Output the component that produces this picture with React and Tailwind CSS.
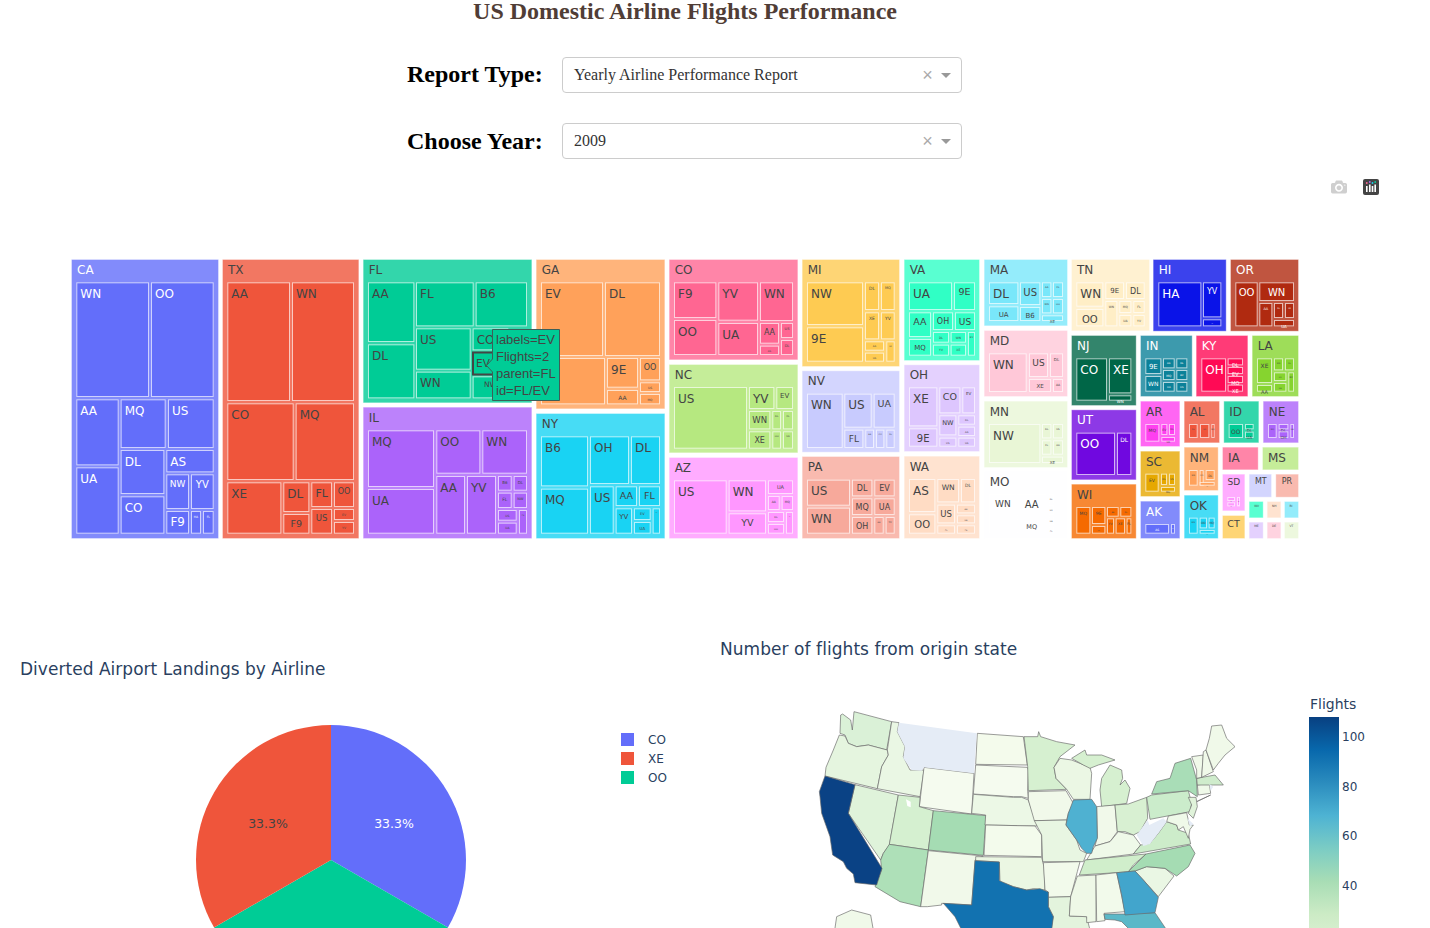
const DV = '"DejaVu Sans", Verdana, sans-serif';

const Z1 = [60, 250], Z2 = [530, 250], Z3 = [980, 250];

const TILES = [
  { s: 'CA', c: '#636efa', t: '#ffffff', o: Z1, b: [33, 477, 27, 867], k: [
    [49,267,97,441,'WN'],[273,461,97,441,'OO'],[49,176,448,646,'AA'],[182,317,448,594,'MQ'],[324,461,448,594,'US'],
    [49,176,652,851,'UA'],[182,313,600,732,'DL'],[319,461,600,667,'AS'],[182,313,739,851,'CO'],[319,387,673,777,'NW',9],
    [393,461,673,777,'YV',10],[319,387,783,851,'F9',11.9],[393,423,783,851,'HA',3],[429,461,783,851,'FL',3],
  ]},
  { s: 'TX', c: '#EF553B', t: '#444444', o: Z1, b: [486, 898, 27, 867], k: [
    [502,690,97,453,'AA'],[696,882,97,453,'WN'],[502,701,460,690,'CO'],[707,882,460,690,'MQ'],[502,664,697,851,'XE'],
    [670,748,697,786,'DL'],[754,816,697,771,'FL',11],[822,882,697,771,'OO',8],[670,748,792,851,'F9',9.5],
    [754,816,777,851,'US',8.5],[822,882,777,810,'EV',3],[822,882,816,851,'YV',3],
  ]},
  { s: 'FL', c: '#00cc96', t: '#444444', o: Z1, b: [908, 1417, 27, 460], k: [
    [924,1063,97,276,'AA'],[924,1063,283,445,'DL'],[1068,1241,97,229,'FL'],[1247,1401,97,229,'B6'],[1068,1232,235,359,'US'],
    [1068,1232,365,445,'WN'],[1238,1345,235,301,'CO'],[1238,1345,379,445,'NW',7.5],
  ]},
  { s: 'IL', c: '#ab63fa', t: '#444444', o: Z1, b: [908, 1417, 470, 867], k: [
    [924,1122,541,711,'MQ'],[1129,1261,541,671,'OO'],[1267,1401,541,671,'WN'],[924,1122,717,851,'UA'],[1129,1215,678,851,'AA'],
    [1221,1308,678,851,'YV'],[1314,1355,678,722,'B6',4],[1361,1401,678,722,'DL',4],[1314,1355,728,774,'FL',4.5],[1361,1401,728,774,'NW',3.5],
    [1314,1370,780,812,'US',3],[1377,1401,780,851,'F9',2],[1314,1370,818,851,'UA',3],
  ]},
  { s: 'GA', c: '#FFA15A', t: '#444444', o: Z2, b: [17, 406, 27, 478], k: [
    [33,219,97,318,'EV'],[225,390,97,318,'DL'],[33,225,324,463,'FL'],[231,324,324,413,'9E'],[330,390,324,391,'OO',8],
    [330,390,397,426,'US',3],[231,324,420,463,'AA',6],[330,390,432,463,'MQ',3],
  ]},
  { s: 'NY', c: '#19d3f3', t: '#444444', o: Z2, b: [17, 406, 489, 867], k: [
    [33,174,559,709,'B6'],[180,297,559,702,'OH'],[303,390,559,702,'DL'],[33,174,716,851,'MQ'],[180,251,709,851,'US'],
    [257,321,709,768,'AA',9.5],[327,390,709,768,'FL',9.5],[257,306,775,851,'YV',7],[312,362,775,810,'EV',3.5],[312,362,816,851,'UA',4],[368,390,775,851,'WN',1],
  ]},
  { s: 'CO', c: '#FF6692', t: '#444444', o: Z2, b: [416, 805, 27, 331], k: [
    [432,559,97,204,'F9'],[565,684,97,212,'YV'],[690,789,97,213,'WN'],[432,559,210,315,'OO'],[565,684,219,315,'UA'],
    [690,747,219,281,'AA',8],[753,789,219,264,'US',3.5],[690,747,287,315,'AS',2.5],[753,789,270,315,'DL',3.5],
  ]},
  { s: 'NC', c: '#B6E880', t: '#444444', o: Z2, b: [416, 805, 342, 610], k: [
    [432,651,411,596,'US'],[657,733,411,477,'YV'],[739,789,411,477,'EV',7],[657,721,483,538,'WN',8.5],[727,753,483,538,'DL',2.5],
    [759,789,483,538,'FL',2.5],[657,721,544,596,'XE',8],[727,753,544,596,'OO',2.5],[759,789,544,596,'UA',2.5],
  ]},
  { s: 'AZ', c: '#FF97FF', t: '#444444', o: Z2, b: [416, 805, 621, 867], k: [
    [432,590,691,851,'US'],[596,708,691,784,'WN'],[714,789,691,732,'UA',5],[596,708,790,851,'YV',9.5],[714,749,738,780,'AA',3],
    [755,789,738,780,'MQ',3],[714,762,786,816,'DL',2.5],[768,789,786,851,'F9',1],[714,762,822,851,'OO',2.5],
  ]},
  { s: 'MI', c: '#FECB52', t: '#444444', o: Z2, b: [815, 1110, 27, 351], k: [
    [831,999,97,225,'NW'],[831,999,232,335,'9E'],[1005,1047,97,180,'DL',4.5],[1053,1094,97,180,'MQ',3.5],[1005,1047,187,268,'XE',4.5],
    [1053,1094,187,268,'YV',4.5],[1005,1062,274,302,'AA',2.5],[1069,1094,274,335,'US',2],[1005,1062,308,335,'UA',2.5],
  ]},
  { s: 'NV', c: '#c8cbfe', t: '#444444', o: Z2, b: [815, 1110, 361, 608], k: [
    [831,938,431,594,'WN'],[943,1025,431,533,'US'],[1031,1094,431,533,'UA',9.5],[943,1000,539,594,'FL',9],[1006,1032,539,594,'AA',2],
    [1038,1063,539,594,'OO',2],[1069,1094,539,594,'DL',2],
  ]},
  { s: 'PA', c: '#f7a99b', t: '#444444', o: Z2, b: [815, 1110, 618, 867], k: [
    [831,960,689,767,'US'],[831,960,773,851,'WN'],[966,1027,689,739,'DL',8],[1033,1094,689,739,'EV',8],[966,1027,745,795,'MQ',8],
    [1033,1094,745,795,'UA',8],[966,1027,801,851,'OH',8],[1033,1061,801,851,'AA',2],[1067,1094,801,851,'YV',2.5],
  ]},
  { s: 'VA', c: '#30ffc5', t: '#444444', o: Z2, b: [1121, 1350, 27, 333], k: [
    [1137,1266,97,180,'UA'],[1272,1335,97,180,'9E',9.5],[1137,1203,187,261,'AA',9.5],[1209,1269,187,240,'OH',8],[1275,1335,187,240,'US',9],
    [1137,1203,267,317,'MQ',7],[1209,1257,246,278,'DL',3],[1262,1308,246,278,'WN',3],[1314,1335,246,317,'EV',2.5],[1209,1257,284,317,'YV',3],[1262,1308,284,317,'XE',3],
  ]},
  { s: 'OH', c: '#ddc6fe', t: '#444444', o: Z2, b: [1121, 1350, 343, 606], k: [
    [1137,1222,412,529,'XE'],[1228,1291,412,490,'CO',9.5],[1297,1335,412,490,'EV',4],[1228,1279,496,556,'NW',6.5],[1285,1335,496,524,'DL',2.5],
    [1285,1335,530,558,'AA',2.5],[1137,1222,535,590,'9E',10],[1228,1279,563,590,'US',2.5],[1285,1335,563,590,'UA',2.5],
  ]},
  { s: 'WA', c: '#ffdcc4', t: '#444444', o: Z2, b: [1121, 1350, 617, 867], k: [
    [1137,1216,687,786,'AS'],[1137,1216,793,851,'OO',10],[1222,1287,687,757,'WN',7.5],[1293,1335,687,757,'DL',4.5],[1222,1275,764,820,'US',8.5],
    [1281,1335,764,790,'AA',2],[1281,1335,796,820,'UA',2],[1222,1275,826,851,'FL',2],[1281,1335,826,851,'F9',2],
  ]},
  { s: 'MA', c: '#79e7fa', t: '#444444', o: Z3, b: [11, 264, 27, 229], k: [
    [27,115,97,162,'DL'],[120,181,97,165,'US',10],[186,214,97,141,'AA',2.5],[219,249,97,141,'FL',2.5],[186,214,147,190,'WN',2.5],
    [219,249,147,190,'OO',2.5],[27,115,169,213,'UA',7],[120,181,171,213,'B6',7],[186,249,196,213,'XE',4],
  ]},
  { s: 'MD', c: '#ffc8d8', t: '#444444', o: Z3, b: [11, 264, 240, 441], k: [
    [27,140,310,426,'WN'],[147,204,310,381,'US',9],[210,249,310,381,'DL',4],[147,213,387,426,'XE',5.5],[219,249,387,426,'AA',3],
  ]},
  { s: 'MN', c: '#e9f6d6', t: '#444444', o: Z3, b: [11, 264, 452, 654], k: [
    [27,181,522,639,'NW'],[186,214,522,565,'DL',2.5],[219,249,522,565,'US',2.5],[186,214,571,614,'FL',2.5],[219,249,571,614,'AA',2.5],[186,249,620,639,'XE',4],
  ]},
  { s: 'MO', c: '#fefeff', t: '#444444', o: Z3, b: [11, 264, 664, 867], k: [
    [27,110,732,851,'WN',9],[110,200,732,800,'AA',10],[110,200,806,851,'MQ',6.5],[205,222,732,760,'DL',2],[205,222,765,795,'US',2],[205,222,800,825,'UA',2],[205,222,830,851,'FL',2],
  ]},
  { s: 'TN', c: '#ffeec6', t: '#444444', o: Z3, b: [273, 510, 27, 244], k: [
    [289,370,97,170,'WN'],[289,370,177,229,'OO',10],[376,432,97,147,'9E',7],[438,494,97,147,'DL',8],[376,412,153,229,'WN',3],
    [418,454,153,189,'MQ',3],[460,494,153,189,'FL',3],[418,454,195,229,'UA',3],[460,494,195,229,'YV',3],
  ]},
  { s: 'HI', c: '#0a13e8', t: '#ffffff', o: Z3, b: [518, 740, 27, 245], k: [
    [535,664,97,229,'HA'],[669,724,97,202,'YV',8],[669,724,208,229,'US',1],
  ]},
  { s: 'OR', c: '#b02a10', t: '#ffffff', o: Z3, b: [750, 957, 27, 245], k: [
    [766,833,97,229,'OO',10],[838,942,97,153,'WN',10],[838,877,159,229,'AA',3.5],[882,909,159,204,'DL',2],[915,942,159,204,'US',2],[882,942,210,229,'UA',4],
  ]},
  { s: 'NJ', c: '#006647', t: '#ffffff', o: Z3, b: [273, 470, 255, 468], k: [
    [289,381,325,452,'CO'],[387,454,325,430,'XE'],[387,454,436,452,'WN',4],
  ]},
  { s: 'IN', c: '#0c8199', t: '#ffffff', o: Z3, b: [480, 638, 255, 441], k: [
    [496,544,325,372,'9E',7],[549,584,325,355,'AA',2.5],[589,622,325,355,'DL',2.5],[496,544,378,425,'WN',6],[549,584,360,390,'MQ',3],
    [589,622,360,390,'EV',2.5],[549,584,396,425,'UA',2.5],[589,622,396,425,'US',2.5],
  ]},
  { s: 'KY', c: '#ff0a55', t: '#ffffff', o: Z3, b: [647, 805, 255, 441], k: [
    [664,738,325,425,'OH'],[743,789,325,346,'DL',5],[743,789,351,372,'EV',5],[743,789,378,399,'MQ',5],[743,789,404,425,'XE',5],
  ]},
  { s: 'LA', c: '#86d42f', t: '#444444', o: Z3, b: [815, 957, 255, 441], k: [
    [831,876,325,399,'XE',6],[882,909,325,361,'WN',2],[915,942,325,361,'DL',2],[882,919,367,393,'US',2],[925,942,367,425,'EV',2.5],[882,919,399,425,'UA',2],[831,876,405,425,'AA',5],
  ]},
  { s: 'UT', c: '#7008e0', t: '#ffffff', o: Z3, b: [273, 470, 478, 691], k: [
    [289,405,548,675,'OO'],[411,454,548,675,'DL',6],
  ]},
  { s: 'WI', c: '#f56a00', t: '#444444', o: Z3, b: [273, 470, 701, 867], k: [
    [289,331,771,851,'MQ',4.5],[336,376,771,822,'9E',4.5],[336,376,828,851,'US',1.5],[381,416,771,800,'AA',2],[421,454,771,800,'DL',2],
    [381,402,805,851,'YV',3],[407,435,805,851,'XE',3.5],[440,454,805,851,'FL',3.5],
  ]},
  { s: 'AR', c: '#ff40f0', t: '#444444', o: Z3, b: [480, 601, 452, 591], k: [
    [496,538,522,575,'MQ',4.5],[544,562,522,555,'EV',3],[567,585,522,555,'DL',2.5],[544,585,561,575,'UA',2.5],
  ]},
  { s: 'SC', c: '#e6a800', t: '#444444', o: Z3, b: [480, 601, 602, 741], k: [
    [496,536,671,725,'EV',4.5],[543,561,671,705,'DL',2.5],[567,585,671,705,'US',2.5],[543,585,711,725,'MQ',2.5],
  ]},
  { s: 'AK', c: '#636efa', t: '#ffffff', o: Z3, b: [480, 601, 752, 867], k: [
    [496,567,822,851,'AS',3],[573,585,822,851,'DL',1],
  ]},
  { s: 'AL', c: '#EF553B', t: '#444444', o: Z3, b: [611, 720, 452, 580], k: [
    [627,653,522,564,'DL',2],[660,688,522,564,'US',2],[694,704,522,564,'MQ',2],
  ]},
  { s: 'NM', c: '#FFA15A', t: '#444444', o: Z3, b: [611, 716, 590, 723], k: [
    [627,653,660,707,'WN',2],[659,671,660,707,'OO',2],[677,704,660,690,'DL',3],[659,704,696,707,'UA',1],
  ]},
  { s: 'OK', c: '#19d3f3', t: '#444444', o: Z3, b: [611, 716, 734, 867], k: [
    [627,653,803,851,'WN',2],[659,681,803,835,'OO',3],[686,704,803,835,'MQ',3],[659,704,840,851,'AA',1],
  ]},
  { s: 'ID', c: '#00cc96', t: '#444444', o: Z3, b: [730, 838, 452, 580], k: [
    [746,789,522,564,'OO',6],[795,821,522,538,'DL',4],[795,821,545,564,'UA',4],
  ]},
  { s: 'NE', c: '#ab63fa', t: '#444444', o: Z3, b: [848, 957, 452, 580], k: [
    [864,890,522,564,'MQ',2],[896,925,522,538,'DL',4],[896,925,544,564,'OH',4],[931,942,522,564,'UA',2],
  ]},
  { s: 'IA', c: '#FF6692', t: '#444444', o: Z3, b: [726, 836, 590, 661], k: [] },
  { s: 'MS', c: '#B6E880', t: '#444444', o: Z3, b: [846, 957, 590, 661], k: [] },
  { s: 'SD', c: '#FF97FF', t: '#444444', fs: 9, o: Z3, b: [726, 796, 671, 784], k: [
    [742,765,741,753,'DL',1],[742,765,757,769,'US',1],[771,780,741,769,'MQ',1],
  ]},
  { s: 'CT', c: '#FECB52', t: '#444444', fs: 9.5, o: Z3, b: [726, 796, 795, 867], k: [] },
  { s: 'MT', c: '#c8cbfe', t: '#444444', fs: 8, o: Z3, b: [806, 876, 671, 743], k: [] },
  { s: 'PR', c: '#f7a99b', t: '#444444', fs: 8, o: Z3, b: [886, 957, 671, 743], k: [] },
  { s: 'WV', c: '#30ffc5', t: '#444444', fs: 3, o: Z3, b: [806, 851, 753, 805], k: [] },
  { s: 'NH', c: '#ffdcc4', t: '#444444', fs: 3, o: Z3, b: [860, 904, 753, 805], k: [] },
  { s: 'RI', c: '#79e7fa', t: '#444444', fs: 3, o: Z3, b: [912, 957, 753, 805], k: [] },
  { s: 'ME', c: '#ddc6fe', t: '#444444', fs: 3, o: Z3, b: [806, 851, 815, 867], k: [] },
  { s: 'DE', c: '#ffc8d8', t: '#444444', fs: 3, o: Z3, b: [860, 904, 815, 867], k: [] },
  { s: 'VT', c: '#e9f6d6', t: '#444444', fs: 3, o: Z3, b: [912, 957, 815, 867], k: [] },
];

function Tile({ tile }) {
  const [ox, oy] = tile.o;
  const X = (z) => ox + z / 3;
  const Y = (z) => oy + z / 3;
  const [a, b, c, d] = tile.b;
  const ofs = tile.fs ?? 12;
  return (
    <g fontFamily={DV}>
      <rect x={X(a) + 0.5} y={Y(c) + 0.5} width={(b - a) / 3 - 1} height={(d - c) / 3 - 1} fill={tile.c} fillOpacity={0.8} stroke="#ffffff" strokeOpacity={0.35} />
      <text x={X(a) + (ofs < 12 ? ((b - a) / 3 - ofs * 1.35) / 2 : 6)} y={Y(c) + (ofs < 12 ? ofs + 2.5 : 15)} fontSize={ofs} fill={tile.t}>{tile.s}</text>
      {tile.k.map(([x0, x1, y0, y1, label, fs = 12], i) => {
        const w = (x1 - x0) / 3;
        const h = (y1 - y0) / 3;
        return (
          <g key={i}>
            <rect x={X(x0) + 0.5} y={Y(y0) + 0.5} width={w - 1} height={h - 1} fill={tile.c} stroke="#ffffff" strokeOpacity={0.65} />
            <text
              x={fs < 12 ? X(x0) + w / 2 : X(x0) + 4}
              y={Y(y0) + 3.5 + fs}
              fontSize={fs}
              textAnchor={fs < 12 ? 'middle' : 'start'}
              fill={tile.t}
            >{label}</text>
          </g>
        );
      })}
    </g>
  );
}

function Treemap() {
  return (
    <svg width="1250" height="295" viewBox="60 250 1250 295" className="block ml-[60px]">
      {TILES.map((t) => <Tile key={t.s} tile={t} />)}
      <g fontFamily={DV}>
        <rect x="473" y="352.5" width="30" height="22" fill="#00cc96" stroke="#444444" strokeWidth="2" />
        <text x="476" y="367" fontSize="10.5" fill="#444444">EV</text>
      </g>
      <path d="M486.5 365.5 L492.5 359 V329.5 H559.5 V400.5 H492.5 V372 Z" fill="#00cc96" stroke="#3c5f58" strokeWidth="1" />
      <g fontFamily='"Liberation Sans", Arial, sans-serif' fontSize="13" fill="#444444">
        <text x="496" y="344">labels=EV</text>
        <text x="496" y="361">Flights=2</text>
        <text x="496" y="378">parent=FL</text>
        <text x="496" y="395">id=FL/EV</text>
      </g>
    </svg>
  );
}

const STATES = [
  ['WA', '#daf1d7', '122,75 128,72 152,90 157,120 162,65 275,95 260,180 205,165 170,170 145,160 135,135 120,130'],
  ['OR', '#e5f5df', '118,135 135,138 145,160 170,170 205,165 262,180 265,195 245,230 232,296 75,258 78,232 100,180'],
  ['NV', '#dff3da', '165,284 295,315 268,465 250,490 242,510 145,370'],
  ['ID', '#eaf7e4', '275,95 297,98 292,125 315,170 310,200 330,240 372,240 360,320 232,296 245,230 265,195 262,180'],
  ['WY', '#f5fbef', '372,232 522,250 515,372 358,350'],
  ['UT', '#d5f0d0', '295,315 360,322 358,350 400,362 385,480 268,463'],
  ['CO', '#a5dcb3', '400,362 558,377 550,496 385,480'],
  ['AZ', '#aee0b8', '268,463 385,480 362,650 300,635 225,590 232,570 245,540 242,510 250,490'],
  ['NM', '#f1f9ea', '385,482 550,498 525,510 525,515 515,645 425,640 425,645 382,650 362,650'],
  ['ND', '#f4fbec', '532,130 670,140 682,225 527,223'],
  ['SD', '#f5fbef', '527,225 682,232 685,240 683,300 685,325 665,320 640,320 520,312'],
  ['NE', '#ecf8e6', '520,313 640,322 665,322 685,330 700,372 712,408 555,405 557,375 515,370'],
  ['KS', '#f3fbec', '557,405 705,408 725,435 725,500 552,496'],
  ['OK', '#ebf7e3', '527,500 725,502 732,530 735,600 700,596 680,600 640,590 600,575 598,516 527,512'],
  ['MN', '#d6f0d0', '672,140 713,140 716,125 722,140 770,155 825,165 780,200 762,232 768,265 800,298 685,302 683,230'],
  ['IA', '#f1f9ea', '685,305 798,302 820,340 805,370 800,390 703,392 685,330'],
  ['MO', '#e8f6e2', '703,392 800,390 798,405 830,450 840,480 860,490 850,515 835,515 728,515 725,435'],
  ['AR', '#f2faeb', '730,518 840,515 832,545 812,620 745,622 745,606 735,600'],
  ['LA', '#e3f4dd', '745,622 812,620 808,678 860,680 870,720 752,720 760,680 745,650'],
  ['WI', '#ebf7e4', '780,205 815,210 870,232 875,250 870,328 820,328 800,298 768,265 762,232'],
  ['MIU', '#d6f0d0', '815,205 855,180 860,195 905,195 945,210 895,225 870,235 850,225'],
  ['MIL', '#d6f0d0', '905,350 900,300 905,265 930,225 965,240 968,265 960,285 975,270 990,295 980,340 945,345'],
  ['IN', '#f1f9ea', '890,350 945,345 952,425 930,455 885,468 892,440'],
  ['OH', '#d8f0d2', '945,345 985,342 1040,322 1043,385 1020,425 1000,435 975,425 952,425'],
  ['KY', '#eff9e9', '860,510 885,468 930,455 955,425 1000,435 1022,465 1000,492'],
  ['TN', '#d0eecb', '838,555 855,510 1038,492 1000,525 985,545 950,548'],
  ['MS', '#eef8e7', '812,620 832,558 888,555 888,695 860,698 860,680 808,678'],
  ['AL', '#f2faeb', '888,555 950,548 975,665 912,670 915,692 890,695'],
  ['SC', '#eaf7e4', '1005,543 1040,530 1095,535 1122,558 1075,620 1030,570'],
  ['NC', '#a5dcb3', '985,545 1038,492 1170,465 1185,490 1165,530 1130,558 1095,535 1040,530 1005,543'],
  ['VA', '#cdecca', '1000,492 1022,465 1050,460 1075,430 1100,395 1130,405 1135,420 1165,430 1172,462'],
  ['PA', '#cbeccb', '1040,322 1055,315 1165,302 1175,340 1170,365 1050,388'],
  ['NY', '#a9ddb7', '1055,312 1070,275 1110,265 1125,220 1172,205 1190,270 1192,320 1165,302'],
  ['LI', '#a9ddb7', '1190,335 1232,315 1196,332'],
  ['NJ', '#e0f3da', '1165,322 1188,322 1192,350 1180,385 1165,370 1175,345'],
  ['MD', '#eff9e9', '1105,378 1160,368 1168,405 1180,405 1170,418 1165,445 1150,410 1135,420 1130,405 1100,395'],
  ['CT', '#eff9e9', '1192,285 1228,280 1232,310 1195,315'],
  ['MA', '#cfeccc', '1190,265 1245,255 1270,285 1240,285 1192,285'],
  ['VT', '#f0f9e9', '1175,200 1210,195 1205,262 1190,265 1190,240'],
  ['NH', '#f0f9e9', '1210,185 1218,180 1240,245 1205,262'],
  ['ME', '#f0f9e9', '1218,180 1228,145 1235,108 1265,105 1280,145 1305,170 1275,195 1255,220 1240,240'],
  ['AK', '#f0f9e9', '105,714 110,680 155,660 212,675 220,720 105,720'],
  ['FL', '#5bb8c8', '912,672 975,672 1065,668 1100,720 990,720 965,695 945,690 915,688'],
  ['GA', '#42a5cc', '950,548 1005,543 1030,570 1075,622 1065,668 975,675 965,615'],
  ['IL', '#4fb1d1', '820,330 875,328 890,350 892,445 880,470 875,490 860,490 845,475 830,450 798,405 805,370'],
  ['TX', '#1272b0', '525,512 598,516 598,572 640,590 680,600 720,596 745,606 745,650 760,680 755,720 485,720 465,680 430,640 515,645'],
  ['CA', '#0a4285', '75,258 165,284 145,370 246,535 230,585 165,578 160,552 140,535 130,515 98,495 90,440 65,370 60,320 58,305'],
];

function UsMap() {
  return (
    <svg width="460" height="238" viewBox="0 0 1380 714" className="block shrink-0">
      {STATES.map(([k, f, p]) => (
        <polygon key={k} points={p} fill={f} stroke="#6a6a6a" strokeWidth="2" strokeLinejoin="round" />
      ))}
      <polygon points="297,98 530,130 522,250 372,232 365,242 335,240 310,205 315,170 292,125" fill="#e5ecf6" />
      <polygon points="1010,435 1043,390 1048,405 1090,385 1100,395 1075,430 1050,462 1030,468" fill="#e5ecf6" />
      <polygon points="1228,282 1240,290 1232,302" fill="#e5ecf6" />
      <polygon points="1162,385 1180,402 1170,410" fill="#e5ecf6" />
      <polygon points="318,328 332,335 332,352 322,348" fill="#ffffff" />
    </svg>
  );
}

function Pie() {
  const cx = 135, cy = 135, r = 135;
  const p = (deg) => {
    const a = (deg - 90) * Math.PI / 180;
    return `${(cx + r * Math.cos(a)).toFixed(2)} ${(cy + r * Math.sin(a)).toFixed(2)}`;
  };
  const slice = (a, b) => `M${cx} ${cy} L${p(a)} A${r} ${r} 0 0 1 ${p(b)} Z`;
  return (
    <svg width="270" height="270" viewBox="0 0 270 270" className="block shrink-0">
      <path d={slice(0, 120)} fill="#636efa" />
      <path d={slice(120, 240)} fill="#00cc96" />
      <path d={slice(240, 360)} fill="#EF553B" />
      <g fontFamily={DV} fontSize="12.5" textAnchor="middle">
        <text x="198" y="103" fill="#ffffff">33.3%</text>
        <text x="72" y="103" fill="#444444">33.3%</text>
      </g>
    </svg>
  );
}

function Dropdown({ value, top }) {
  return (
    <div className="w-[400px] h-[36px] flex items-center bg-white border border-[#cccccc] rounded pl-[11px] pr-[10px]">
      <span className={`flex-1 text-[16px] text-[#333333] leading-[34px] ${top ? '' : '-mt-[1px]'}`}>{value}</span>
      <span className="text-[18px] leading-none text-[#aaaaaa] w-[18px] text-center pl-[1px]" style={{ fontFamily: 'Arial, "Liberation Sans", sans-serif' }}>×</span>
      <span className="w-0 h-0 ml-[5px] border-x-[5px] border-x-transparent border-t-[5px] border-t-[#999999]" />
    </div>
  );
}

function FormRow({ label, value, top, className }) {
  return (
    <div className={`flex items-center gap-[20px] ml-[407px] ${className}`}>
      <div className={`w-[135px] text-[24px] font-bold text-black leading-none whitespace-nowrap ${top ? '-mt-[2px]' : ''}`}>{label}</div>
      <Dropdown value={value} top={top} />
    </div>
  );
}

function ModeBar() {
  return (
    <div className="flex justify-end items-center gap-[16px] pr-[51px] mt-[20px] h-[16px]">
      <svg width="16" height="16" viewBox="0 0 1000 1000">
        <path
          fill="#cfcfcf"
          transform="matrix(1 0 0 -1 0 850)"
          d="M500 450c-83 0-150-67-150-150 0-83 67-150 150-150 83 0 150 67 150 150 0 83-67 150-150 150z m400 150h-120c-16 0-34 13-39 29l-31 93c-6 15-23 28-40 28h-340c-16 0-34-13-39-28l-31-94c-6-15-23-28-40-28h-120c-55 0-100-45-100-100v-450c0-55 45-100 100-100h800c55 0 100 45 100 100v450c0 55-45 100-100 100z m-400-550c-138 0-250 112-250 250 0 138 112 250 250 250 138 0 250-112 250-250 0-138-112-250-250-250z m365 380c-19 0-35 16-35 35 0 19 16 35 35 35 19 0 35-16 35-35 0-19-16-35-35-35z"
        />
      </svg>
      <svg width="16" height="16" viewBox="0 0 16 16">
        <rect width="16" height="16" rx="2" fill="#444444" />
        <g fill="#ffffff">
          <rect x="3" y="7" width="1.6" height="6" />
          <rect x="6" y="5.5" width="1.6" height="7.5" />
          <rect x="8.7" y="7" width="1.6" height="6" />
          <rect x="11.4" y="5.5" width="1.6" height="7.5" />
        </g>
        <circle cx="3.8" cy="4" r="0.9" fill="#ff6692" />
        <circle cx="6.8" cy="3" r="0.9" fill="#ab63fa" />
        <circle cx="9.5" cy="4" r="0.9" fill="#19d3f3" />
        <circle cx="12.2" cy="3" r="0.9" fill="#00cc96" />
      </svg>
    </div>
  );
}

const LEGEND = [['CO', '#636efa'], ['XE', '#EF553B'], ['OO', '#00cc96']];
const TICKS = ['100', '80', '60', '40'];

export default function App() {
  return (
    <div className="w-[1430px] h-[928px] overflow-hidden bg-white" style={{ fontFamily: '"Liberation Serif", "Times New Roman", serif' }}>
      <h1 className="w-[1370px] text-center text-[24px] font-bold leading-[23px] text-[#503D36] h-[23px]">
        US Domestic Airline Flights Performance
      </h1>
      <FormRow label="Report Type:" value="Yearly Airline Performance Report" top className="mt-[34px]" />
      <FormRow label="Choose Year:" value="2009" className="mt-[30px]" />
      <ModeBar />
      <div className="mt-[55px]">
        <Treemap />
      </div>
      <div className="flex" style={{ fontFamily: DV }}>
        <div className="w-[700px] shrink-0 pl-[20px] pt-[114px]">
          <div className="text-[17px] leading-[20px] tracking-[0.03px] text-[#2a3f5f] whitespace-nowrap">Diverted Airport Landings by Airline</div>
          <div className="flex mt-[46px] ml-[176px]">
            <Pie />
            <div className="ml-[155px] mt-[5px] flex flex-col">
              {LEGEND.map(([l, c]) => (
                <div key={l} className="h-[19px] flex items-center gap-[14px] text-[12px] text-[#2a3f5f]">
                  <span className="w-[13px] h-[13px] block border" style={{ backgroundColor: c, borderColor: `${c}aa` }} />
                  <span>{l}</span>
                </div>
              ))}
            </div>
          </div>
        </div>
        <div className="flex-1 pt-[94px] min-w-0">
          <div className="ml-[20px] text-[17px] leading-[20px] tracking-[0.06px] text-[#2a3f5f] whitespace-nowrap">Number of flights from origin state</div>
          <div className="flex mt-[31px] ml-[100px]">
            <UsMap />
            <div className="ml-[49px]">
              <div className="text-[14px] leading-[17px] text-[#2a3f5f] mt-[6px] pl-[1px]">Flights</div>
              <div className="flex mt-[4px]">
                <div className="w-[30px] h-[211px] bg-[linear-gradient(to_bottom,#084081_0%,#0868ac_15.6%,#2b8cbe_31.2%,#4eb3d3_46.8%,#7bccc4_62.3%,#a8ddb5_77.9%,#ccebc5_93.5%,#d4eecc_100%)]" />
                <div className="ml-[3px] pt-[13px] flex flex-col gap-[35.7px]">
                  {TICKS.map((t) => (
                    <div key={t} className="text-[12px] leading-[14px] text-[#2a3f5f]">{t}</div>
                  ))}
                </div>
              </div>
            </div>
          </div>
        </div>
      </div>
    </div>
  );
}
